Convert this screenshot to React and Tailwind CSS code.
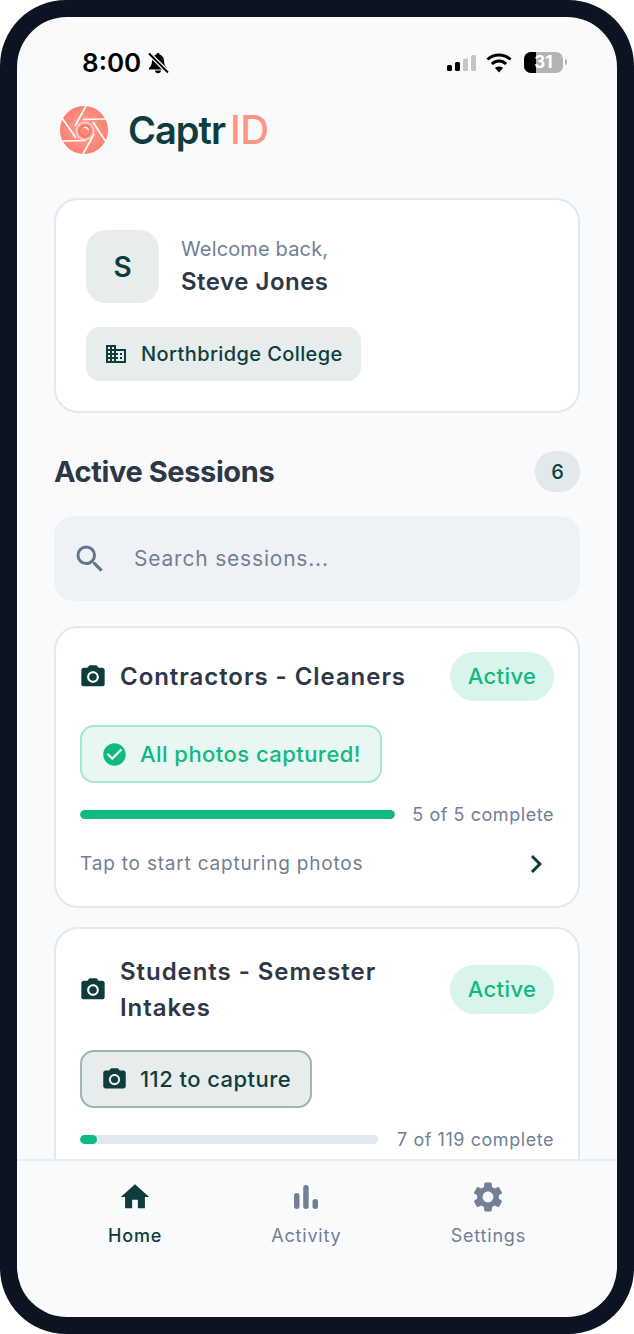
import React from "react";
import { MdCameraAlt, MdCheckCircle, MdChevronRight, MdSettings, MdHome, MdSearch, MdOutlineDomain } from "react-icons/md";

const font = { fontFamily: "Inter, 'Noto Sans', sans-serif" };

function Logo() {
  return (
    <svg width="50" height="50" viewBox="0 0 50 50">
      <defs>
        <radialGradient id="lg" cx="50%" cy="50%" r="50%">
          <stop offset="0%" stopColor="#fdaa9c" />
          <stop offset="100%" stopColor="#fd7f6f" />
        </radialGradient>
      </defs>
      <circle cx="25" cy="25" r="24" fill="url(#lg)" />
      <g stroke="#fff" strokeWidth="1.6" fill="none">
        <path d="M27 1 L16 21" />
        <path d="M47 14 L24 14.5" />
        <path d="M47 37 L34 17" />
        <path d="M24 49 L35 29" />
        <path d="M4 36 L27 35.5" />
        <path d="M3 13 L17 33" />
        <circle cx="26" cy="26" r="8.5" fill="#fd8e7f" stroke="#ffd6cf" />
        <circle cx="26" cy="26" r="5.5" stroke="#f46f60" strokeWidth="1.2" />
        <path d="M25 22.5 A4 4 0 0 1 29.5 25" strokeWidth="1.2" />
      </g>
    </svg>
  );
}

function Signal() {
  return (
    <svg width="30" height="18" viewBox="0 0 30 18">
      <rect x="0" y="11" width="5" height="6" rx="1.5" fill="#000" />
      <rect x="8" y="8" width="5" height="9" rx="1.5" fill="#000" />
      <rect x="16" y="4.5" width="5" height="12.5" rx="1.5" fill="#c4c4c4" />
      <rect x="24" y="1" width="5" height="16" rx="1.5" fill="#c4c4c4" />
    </svg>
  );
}

function Wifi() {
  return (
    <svg width="26" height="20" viewBox="0 0 26 20" fill="none" stroke="#000" strokeWidth="3">
      <path d="M1.5 6.5 C8 0.5 18 0.5 24.5 6.5" />
      <path d="M5.8 11 C10 7 16 7 20.2 11" />
      <path d="M13 19.5 L9 15 C11 13 15 13 17 15 Z" fill="#000" stroke="none" />
    </svg>
  );
}

function Battery() {
  return (
    <div className="flex items-center gap-[2px] -mt-[2px]">
      <div className="relative w-[39px] h-[21px] rounded-[7px] bg-[#b3b3b3] overflow-hidden flex items-center justify-center">
        <div className="absolute left-0 top-0 bottom-0 w-[12px] bg-black" />
        <span className="relative text-white text-[17px] leading-none font-bold">31</span>
      </div>
      <div className="w-[2px] h-[6px] rounded-r-sm bg-[#b3b3b3]" />
    </div>
  );
}

function BellOff() {
  return (
    <svg width="22" height="22" viewBox="0 0 22 22">
      <path d="M11 1 C12 1 12.6 1.7 12.6 2.6 C15.6 3.4 17 6 17 9 C17 12 18 14 20 16 L20 17.5 L2 17.5 L2 16 C4 14 5 12 5 9 C5 6 6.4 3.4 9.4 2.6 C9.4 1.7 10 1 11 1 Z" fill="#000" />
      <path d="M8 18.5 H14 C14 20.2 12.6 21.2 11 21.2 C9.4 21.2 8 20.2 8 18.5 Z" fill="#000" />
      <path d="M2 1.5 L21 20.5" stroke="#f8fafc" strokeWidth="4.5" />
      <path d="M2 1.5 L21 20.5" stroke="#000" strokeWidth="1.8" />
    </svg>
  );
}

function Bars() {
  return (
    <svg width="26" height="26" viewBox="0 0 26 26" fill="#718096">
      <rect x="1" y="9" width="5.5" height="16" rx="2.75" />
      <rect x="10.2" y="1" width="5.5" height="24" rx="2.75" />
      <rect x="19.5" y="15" width="5.5" height="10" rx="2.75" />
    </svg>
  );
}

function Chip({ green, icon, children }) {
  return (
    <div className={`inline-flex items-center gap-[13px] h-[58px] pl-[20px] pr-[19px] rounded-[14px] border-2 text-[22px] font-medium tracking-[0.45px] ${green ? "bg-[#e8f7f2] border-[#a7e6cf] text-[#10b981]" : "bg-[#e7ecec] border-[#a0b3b3] text-[#0f3d3e]"}`}>
      {icon}
      <span>{children}</span>
    </div>
  );
}

function SessionCard({ title, chip, fill, track, label, tap, h, tall }) {
  return (
    <div className={`shrink-0 bg-white rounded-[24px] border-2 border-[#e2e8f0] px-[24px] ${h}`}>
      <div className={`flex items-center justify-between ${tall ? "mt-[25px]" : "mt-[24px]"}`}>
        <div className="flex items-center gap-[14px]">
          <MdCameraAlt size={28} className="text-[#0f3d3e] -mx-[1px] shrink-0" />
          <div className="w-[300px] text-[24px] leading-[36px] font-semibold text-[#2d3748] tracking-[0.95px]">{title}</div>
        </div>
        <div className={`w-[104px] h-[49px] rounded-full bg-[#d9f5eb] text-[#10b981] text-[22px] font-medium flex items-center justify-center tracking-[0.4px] ${tall ? "-mt-[1px]" : ""}`}>Active</div>
      </div>
      <div className="mt-[24px]">{chip}</div>
      <div className="flex items-center justify-between mt-[18px]">
        <div className={`h-[9px] rounded-full bg-[#e2e8f0] overflow-hidden ${track}`}>
          <div className={`h-full bg-[#10b981] rounded-full ${fill}`} />
        </div>
        <span className="text-[18px] text-[#718096] tracking-[0.55px]">{label}</span>
      </div>
      {tap && (
        <div className="flex items-center justify-between mt-[18px]">
          <span className="text-[19px] text-[#718096] tracking-[0.8px]">Tap to start capturing photos</span>
          <MdChevronRight size={36} className="text-[#0f3d3e]" />
        </div>
      )}
    </div>
  );
}

function Tab({ icon, label, active }) {
  return (
    <div className="flex flex-col items-center w-fit">
      <div className="h-[32px] flex items-center justify-center">{icon}</div>
      <span className={`mt-[11px] text-[18px] leading-[24px] tracking-[0.8px] ${active ? "text-[#0f3d3e] font-medium" : "text-[#718096]"}`}>{label}</span>
    </div>
  );
}

export default function App() {
  return (
    <div className="w-[634px] h-[1334px] bg-white" style={font}>
      <div className="w-full h-full bg-[#0b1420] rounded-[66px] p-[17px]">
        <div className="w-full h-full bg-[#f8fafc] rounded-[50px] overflow-hidden flex flex-col">
          <div className="h-[1142px] overflow-hidden">
            <div className="flex items-center justify-between h-[88px] pl-[65px] pr-[50px] pt-[4px]">
              <div className="flex items-center gap-[6px]">
                <span className="text-[26px] font-semibold text-black leading-none">8:00</span>
                <BellOff />
              </div>
              <div className="flex items-center gap-[12px]">
                <div className="-mr-[3px] flex"><Signal /></div>
                <Wifi />
                <Battery />
              </div>
            </div>
            <div className="flex items-center pl-[42px] h-[50px]">
              <Logo />
              <span className="ml-[19px] text-[38px] font-semibold text-[#0f3d3e] tracking-[-1px] leading-none">Captr</span>
              <span className="ml-[5px] text-[40px] font-medium text-[#fd9685] tracking-[-0.6px] leading-none">ID</span>
            </div>
            <div className="px-[37px] pt-[43px] flex flex-col">
              <div className="bg-white rounded-[24px] border-2 border-[#e2e8f0] h-[215px] px-[30px] pt-[30px] shrink-0">
                <div className="flex items-center gap-[22px]">
                  <div className="w-[73px] h-[73px] rounded-[20px] bg-[#e7ecec] flex items-center justify-center text-[28px] font-semibold text-[#0f3d3e]">S</div>
                  <div className="-mt-[2px]">
                    <div className="text-[20px] leading-[32px] text-[#718096] tracking-[0.15px]">Welcome back,</div>
                    <div className="text-[24px] leading-[34px] font-semibold text-[#2d3748] tracking-[0.5px]">Steve Jones</div>
                  </div>
                </div>
                <div className="mt-[24px] inline-flex items-center gap-[14px] h-[54px] pl-[19px] pr-[18px] rounded-[14px] bg-[#e7ecec] text-[20px] font-medium text-[#0f3d3e] tracking-[0.4px]">
                  <MdOutlineDomain size={24} className="-mx-[1px]" />
                  <span>Northbridge College</span>
                </div>
              </div>
              <div className="flex items-center justify-between h-[41px] mt-[38px]">
                <span className="text-[29px] font-bold text-[#2d3748] tracking-[-0.4px]">Active Sessions</span>
                <div className="w-[45px] h-[41px] rounded-[20px] bg-[#e2e9ea] flex items-center justify-center text-[20px] font-medium text-[#0f3d3e]">6</div>
              </div>
              <div className="mt-[24px] h-[85px] rounded-[20px] bg-[#eef2f6] flex items-center pl-[18px] gap-[26px] shrink-0">
                <MdSearch size={36} className="text-[#64748b]" />
                <span className="text-[21px] text-[#718096] tracking-[0.8px]">Search sessions...</span>
              </div>
              <div className="mt-[25px] flex flex-col gap-[19px]">
                <SessionCard
                  h="h-[282px]"
                  title="Contractors - Cleaners"
                  chip={<Chip green icon={<MdCheckCircle size={27} className="-mx-[1px]" />}>All photos captured!</Chip>}
                  fill="w-full"
                  track="w-[315px]"
                  label="5 of 5 complete"
                  tap
                />
                <SessionCard
                  h="h-[300px]"
                  tall
                  title={<>Students - Semester<br />Intakes</>}
                  chip={<Chip icon={<MdCameraAlt size={27} className="-mx-[1px]" />}>112 to capture</Chip>}
                  fill="w-[17px]"
                  track="w-[298px]"
                  label="7 of 119 complete"
                />
              </div>
            </div>
          </div>
          <div className="flex-1 border-t-2 border-[#e9eef3] flex justify-between px-[91px] pt-[20px] items-start">
            <Tab active label="Home" icon={<MdHome size={34} className="text-[#0f3d3e]" />} />
            <Tab label="Activity" icon={<Bars />} />
            <Tab label="Settings" icon={<MdSettings size={36} className="text-[#718096]" />} />
          </div>
        </div>
      </div>
    </div>
  );
}
